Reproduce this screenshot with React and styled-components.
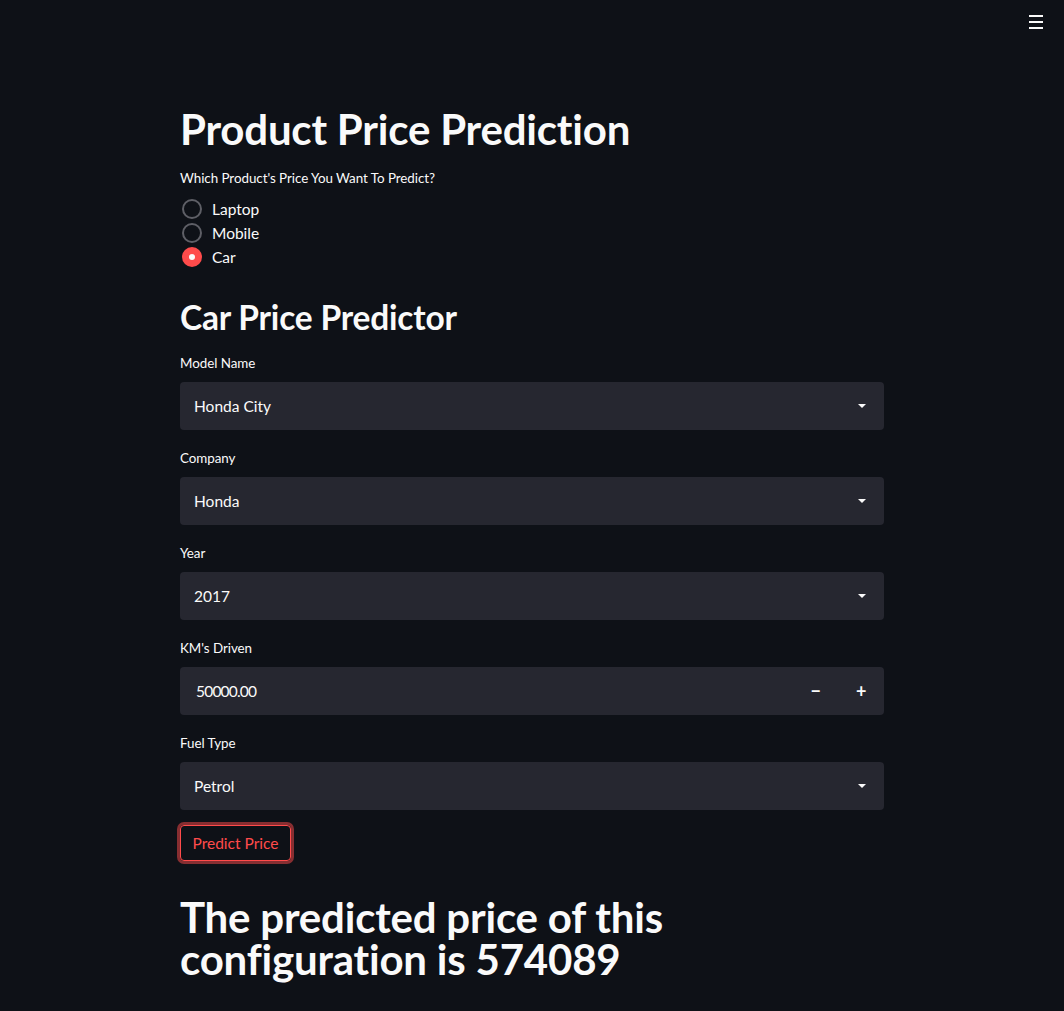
import React from "react";
import styled, { createGlobalStyle } from "styled-components";

const Global = createGlobalStyle`
  html, body { margin: 0; padding: 0; background: #0e1117; }
  body { font-family: Lato, "Noto Sans", sans-serif; color: #fafafa; }
  * { box-sizing: border-box; }
`;

const Page = styled.div`
  min-height: 1011px;
  background: #0e1117;
  display: flex;
  flex-direction: column;
`;

const Header = styled.header`
  height: 44px;
  display: flex;
  justify-content: flex-end;
  align-items: flex-start;
  padding: 15px 21px 0 0;
`;

const MenuButton = styled.div`
  width: 14px;
  display: flex;
  flex-direction: column;
  gap: 4px;
  span {
    display: block;
    height: 2px;
    background: #fafafa;
  }
`;

const Main = styled.main`
  width: 704px;
  margin: 0 auto;
  padding-top: 59px;
  display: flex;
  flex-direction: column;
`;

const Title = styled.h1`
  margin: 0;
  font-size: 42px;
  line-height: 52px;
  font-weight: 700;
  letter-spacing: -0.2px;
`;

const Label = styled.div`
  font-size: 13.4px;
  line-height: 20px;
  height: 20px;
  letter-spacing: -0.05px;
  color: #fafafa;
  margin-top: ${(p) => p.$gap || 0}px;
`;

const RadioGroup = styled.div`
  display: flex;
  flex-direction: column;
  margin-top: 9px;
`;

const RadioItem = styled.label`
  display: flex;
  align-items: center;
  height: 24px;
  gap: 10px;
  padding-left: 2px;
  font-size: 15.5px;
`;

const RadioCircle = styled.span`
  width: 20px;
  height: 20px;
  border-radius: 50%;
  border: ${(p) => (p.$checked ? "none" : "2px solid #5e5f66")};
  background: ${(p) => (p.$checked ? "#ff4b4b" : "transparent")};
  display: flex;
  align-items: center;
  justify-content: center;
  &::after {
    content: "";
    display: ${(p) => (p.$checked ? "block" : "none")};
    width: 6px;
    height: 6px;
    border-radius: 50%;
    background: #fafafa;
  }
`;

const SubTitle = styled.h2`
  margin: 26px 0 14px;
  font-size: 33.5px;
  line-height: 44px;
  font-weight: 700;
  letter-spacing: -0.2px;
`;

const Form = styled.div`
  display: flex;
  flex-direction: column;
  gap: 18px;
`;

const Field = styled.div`
  display: flex;
  flex-direction: column;
  gap: 9px;
`;

const SelectBox = styled.div`
  height: 48px;
  background: #262730;
  border-radius: 4px;
  display: flex;
  align-items: center;
  justify-content: space-between;
  padding: 0 18px 0 14px;
  font-size: 15.5px;
`;

const Chevron = styled.span`
  width: 0;
  height: 0;
  border-left: 4px solid transparent;
  border-right: 4px solid transparent;
  border-top: 4px solid #fafafa;
`;

const NumberBox = styled.div`
  height: 48px;
  background: #262730;
  border-radius: 4px;
  display: flex;
  align-items: stretch;
`;

const NumberValue = styled.div`
  flex: 1;
  display: flex;
  align-items: center;
  padding-left: 16px;
  font-size: 15.5px;
  letter-spacing: -0.8px;
`;

const StepButton = styled.div`
  width: 45.5px;
  display: flex;
  align-items: center;
  justify-content: center;
  font-size: 18px;
  font-weight: 700;
  color: #fafafa;
`;

const PredictButton = styled.button`
  align-self: flex-start;
  margin-top: 15px;
  height: 36px;
  padding: 0 11.5px;
  background: transparent;
  border: 1px solid #ff4b4b;
  border-radius: 4px;
  box-shadow: 0 0 0 3px rgba(255, 75, 75, 0.5);
  color: #ff4b4b;
  font-family: Lato, "Noto Sans", sans-serif;
  font-size: 15.5px;
  cursor: pointer;
`;

const Result = styled.h1`
  margin: 35px 0 0;
  font-size: 42px;
  line-height: 42px;
  font-weight: 700;
  letter-spacing: -0.2px;
`;

const selects = [
  { label: "Model Name", value: "Honda City" },
  { label: "Company", value: "Honda" },
  { label: "Year", value: "2017" },
];

function Select({ label, value }) {
  return (
    <Field>
      <Label>{label}</Label>
      <SelectBox>
        <span>{value}</span>
        <Chevron />
      </SelectBox>
    </Field>
  );
}

export default function App() {
  const options = ["Laptop", "Mobile", "Car"];
  return (
    <Page>
      <Global />
      <Header>
        <MenuButton>
          <span />
          <span />
          <span />
        </MenuButton>
      </Header>
      <Main>
        <Title>Product Price Prediction</Title>
        <Label $gap={13}>Which Product's Price You Want To Predict?</Label>
        <RadioGroup>
          {options.map((o) => (
            <RadioItem key={o}>
              <RadioCircle $checked={o === "Car"} />
              {o}
            </RadioItem>
          ))}
        </RadioGroup>
        <SubTitle>Car Price Predictor</SubTitle>
        <Form>
          {selects.map((s) => (
            <Select key={s.label} {...s} />
          ))}
          <Field>
            <Label>KM's Driven</Label>
            <NumberBox>
              <NumberValue>50000.00</NumberValue>
              <StepButton>−</StepButton>
              <StepButton>+</StepButton>
            </NumberBox>
          </Field>
          <Select label="Fuel Type" value="Petrol" />
        </Form>
        <PredictButton>Predict Price</PredictButton>
        <Result>
          The predicted price of this
          <br />
          configuration is 574089
        </Result>
      </Main>
    </Page>
  );
}
